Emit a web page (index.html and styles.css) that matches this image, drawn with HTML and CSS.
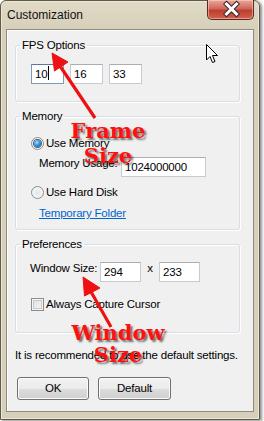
FILE: index.html
```html
<!DOCTYPE html>
<html>
<head>
<meta charset="utf-8">
<link rel="stylesheet" href="styles.css">
</head>
<body>
<div class="window">
  <div class="titlebar">
    <span class="title">Customization</span>
    <div class="close">
      <svg width="47" height="20" viewBox="0 0 47 20">
        <path d="M18.5 5 L28.5 15 M28.5 5 L18.5 15" stroke="#3b2a2a" stroke-width="5" stroke-linecap="square"/>
        <path d="M18.5 5 L28.5 15 M28.5 5 L18.5 15" stroke="#ffffff" stroke-width="3" stroke-linecap="square"/>
      </svg>
    </div>
  </div>
  <div class="client">
    <fieldset class="group g-fps">
      <legend>FPS Options</legend>
      <div class="fps-row">
        <span class="field focus w33">10<i class="caret"></i></span>
        <span class="field w33">16</span>
        <span class="field w33">33</span>
      </div>
    </fieldset>
    <fieldset class="group g-mem">
      <legend>Memory</legend>
      <div class="opt opt-mem"><span class="radio checked"></span>Use Memory</div>
      <div class="mem-row"><span class="lbl mem-lbl">Memory Usage:</span><span class="field w85">1024000000</span></div>
      <div class="opt opt-disk"><span class="radio"></span>Use Hard Disk</div>
      <a class="link">Temporary Folder</a>
    </fieldset>
    <fieldset class="group g-pref">
      <legend>Preferences</legend>
      <div class="size-row"><span class="lbl size-lbl">Window Size:</span><span class="field w41">294</span><span class="times">x</span><span class="field w41">233</span></div>
      <div class="opt opt-chk"><span class="check"></span>Always Capture Cursor</div>
    </fieldset>
    <p class="note">It is recommended to use the default settings.</p>
    <div class="buttons"><span class="btn btn-ok">OK</span><span class="btn btn-def">Default</span></div>
  </div>
</div>

<svg class="overlay" width="264" height="421" viewBox="0 0 264 421">
  <g fill="#ee1111" stroke="#ee1111">
    <line x1="60" y1="66" x2="95" y2="118" stroke-width="3.2"/>
    <polygon points="52,53 54.5,71 68,62" stroke-width="1"/>
    <line x1="90" y1="290" x2="111" y2="327" stroke-width="3.2"/>
    <polygon points="83,277 84.5,296 100,288" stroke-width="1"/>
  </g>
  <path d="M206.5 44.5 L206.5 60 L210 56.5 L212.5 62.5 L215 61.5 L212.5 55.5 L217.5 55.5 Z" fill="#ffffff" stroke="#000000" stroke-width="1" stroke-linejoin="miter"/>
</svg>

<div class="anno anno-frame">Frame<br>Size</div>
<div class="anno anno-window">Window<br>Size</div>
</body>
</html>
```

FILE: styles.css
```css
* { box-sizing: border-box; }

body {
  margin: 0;
  width: 264px;
  height: 421px;
  background: #ffffff;
  position: relative;
  overflow: hidden;
  font-family: "Liberation Sans", Arial, sans-serif;
  font-size: 11.5px;
  letter-spacing: -0.2px;
  white-space: nowrap;
  color: #000;
}

.window {
  width: 260px;
  height: 420px;
  border: 1px solid #5e5a4c;
  border-radius: 6px 6px 0 0;
  background: linear-gradient(#e0dac7, #d6cfb9 30px, #d6cfb9);
  box-shadow: 2px 1px 3px rgba(0, 0, 0, 0.45), inset 0 0 0 1px #ebe6d6;
  display: flex;
  flex-direction: column;
}

.titlebar {
  height: 28px;
  display: flex;
  align-items: flex-start;
}

.title {
  padding: 7px 0 0 6px;
  line-height: 15px;
  font-size: 12px;
  letter-spacing: 0;
  color: #111;
}

.close {
  margin: -1px 5px 0 auto;
  width: 47px;
  height: 20px;
  border: 1px solid #5a2a22;
  border-top: none;
  border-radius: 0 0 5px 5px;
  background: linear-gradient(#e9a79c, #d0675a 45%, #bc3e2f 55%, #d2604c);
  box-shadow: inset 0 0 0 1px rgba(255, 220, 210, 0.5);
  overflow: hidden;
}

.close svg { display: block; margin-top: -1px; }

.client {
  margin: 0 5px;
  width: 248px;
  height: 383px;
  border: 1px solid #8f8b7c;
  background: #f0f0f0;
  box-shadow: inset 1px 1px 0 #ffffff;
  padding: 8px 0 0 8px;
}

.group {
  margin: 0;
  width: 225px;
  border: 1px solid #d5dfe5;
  border-radius: 3px;
  padding: 0 4px;
  box-shadow: inset 1px 1px 0 #ffffff, 1px 1px 0 #ffffff;
}

.group legend {
  padding: 0 2px;
  line-height: 15px;
}

.g-fps { height: 64px; }
.g-mem { height: 121px; margin-top: 7px; }
.g-pref { height: 96px; margin-top: 7px; }

.field {
  display: inline-block;
  height: 20px;
  line-height: 18px;
  background: #fff;
  border: 1px solid #c5cbd1;
  border-top-color: #abadb3;
  padding-left: 3px;
  position: relative;
}

.field.focus { border-color: #7a9cbd; border-top-color: #5a7a9e; }

.caret {
  display: inline-block;
  width: 1px;
  height: 14px;
  background: #000;
  vertical-align: -2px;
  margin-left: 1px;
}

.w33 { width: 33px; }
.w41 { width: 41px; }
.w85 { width: 85px; }

.fps-row {
  display: flex;
  gap: 6px;
  margin: 11px 0 0 11px;
}

.opt {
  display: flex;
  align-items: center;
  line-height: 15px;
  margin-left: 11px;
}

.opt-mem { margin-top: 12px; }
.opt-disk { margin-top: 8px; }
.opt-chk { margin-top: 15px; }

.radio {
  width: 13px;
  height: 13px;
  border-radius: 50%;
  border: 1px solid #8a8c8e;
  background: radial-gradient(circle at 50% 50%, #e4e4e4, #f6f6f6 70%);
  margin-right: 2px;
  display: flex;
  align-items: center;
  justify-content: center;
}

.radio.checked::after {
  content: "";
  width: 7px;
  height: 7px;
  border-radius: 50%;
  background: radial-gradient(circle at 40% 35%, #a6dcf8, #2a87c8 55%, #0f4d86);
  box-shadow: 0 0 0 1px #2f5f8c;
}

.check {
  width: 13px;
  height: 13px;
  border: 1px solid #8a8c8e;
  background: linear-gradient(135deg, #dcdcdc, #f8f8f8);
  box-shadow: inset 0 0 0 1px #f4f4f4, inset 0 0 0 2px #c9c9c9;
  margin-right: 2px;
}

.mem-row {
  display: flex;
  align-items: flex-start;
  margin: 6px 0 0 19px;
}

.lbl { line-height: 15px; margin-top: -1px; }
.mem-lbl { width: 82px; flex: none; }

.link {
  display: block;
  margin: 6px 0 0 19px;
  line-height: 15px;
  color: #0066cc;
  text-decoration: underline;
}

.size-row {
  display: flex;
  align-items: flex-start;
  margin: 10px 0 0 10px;
}

.size-lbl { width: 70px; flex: none; }

.times {
  width: 18px;
  text-align: center;
  line-height: 15px;
  margin-top: -1px;
}

.note {
  margin: 15px 0 0 0;
  line-height: 15px;
}

.buttons {
  display: flex;
  gap: 9px;
  margin: 14px 0 0 2px;
}

.btn {
  height: 23px;
  line-height: 21px;
  text-align: center;
  border: 1px solid #707070;
  border-radius: 3px;
  background: linear-gradient(#f2f2f2, #ebebeb 50%, #dddddd 51%, #cfcfcf);
  box-shadow: inset 0 0 0 1px #fcfcfc;
}

.btn-ok { width: 72px; }
.btn-def { width: 73px; }

.overlay {
  position: absolute;
  left: 0;
  top: 0;
}

.anno {
  position: absolute;
  width: 120px;
  text-align: center;
  font-family: "DejaVu Serif", "Liberation Serif", serif;
  font-weight: bold;
  font-size: 21px;
  letter-spacing: 0;
  color: #ff1010;
  text-shadow: 2px 2px 2px rgba(0, 0, 0, 0.55);
}

.anno-frame {
  left: 48px;
  top: 118px;
  line-height: 25px;
}

.anno-window {
  left: 58px;
  top: 322px;
  line-height: 22px;
}
```
